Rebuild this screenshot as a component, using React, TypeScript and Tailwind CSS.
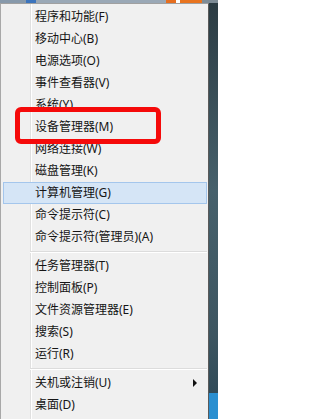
import React from "react";

type Entry = { label: string; sub?: boolean } | "sep";

const entries: Entry[] = [
  { label: "程序和功能(F)" },
  { label: "移动中心(B)" },
  { label: "电源选项(O)" },
  { label: "事件查看器(V)" },
  { label: "系统(Y)" },
  { label: "设备管理器(M)" },
  { label: "网络连接(W)" },
  { label: "磁盘管理(K)" },
  { label: "计算机管理(G)" },
  { label: "命令提示符(C)" },
  { label: "命令提示符(管理员)(A)" },
  "sep",
  { label: "任务管理器(T)" },
  { label: "控制面板(P)" },
  { label: "文件资源管理器(E)" },
  { label: "搜索(S)" },
  { label: "运行(R)" },
  "sep",
  { label: "关机或注销(U)", sub: true },
  { label: "桌面(D)" },
];

const HOVERED = "计算机管理(G)";

function MenuItem({ label, sub }: { label: string; sub?: boolean }) {
  const active = label === HOVERED;
  return (
    <div className="h-[22px] pl-[2px] pr-[1px]">
      <div
        className={
          active
            ? "flex h-full items-center border border-[#a4c6ec] bg-[#d5e5f6] pl-[31px]"
            : "flex h-full items-center border border-transparent pl-[31px]"
        }
      >
        <span className="whitespace-nowrap">{label}</span>
        {sub && (
          <span className="ml-auto mr-[9px] h-0 w-0 border-y-[4px] border-l-[4px] border-y-transparent border-l-[#111]" />
        )}
      </div>
    </div>
  );
}

function Separator() {
  return (
    <div className="flex h-[7px] items-center pl-[29px] pr-[1px]">
      <div className="h-[2px] w-full border-t border-[#dcdcdc] bg-white" />
    </div>
  );
}

export default function App() {
  return (
    <div className="relative flex h-[419px] w-[218px] flex-col overflow-hidden bg-[#34464f] font-['Noto_Sans','Noto_Sans_CJK_SC',sans-serif] text-[12px] leading-none text-[#151515]">
      {/* desktop peeking above the menu */}
      <div className="flex h-[3px] shrink-0">
        <div className="w-[26px] bg-[#8799ab]" />
        <div className="w-[10px] bg-[#3b74bd]" />
        <div className="w-[130px] bg-[#9aa8b6]" />
        <div className="w-[10px] bg-[#e66e1f]" />
        <div className="w-[4px] bg-white" />
        <div className="w-[22px] bg-[#e8741f]" />
        <div className="flex-1 bg-[#7e8c96]" />
      </div>

      <div className="flex min-h-0 flex-1">
        <div className="w-[209px] shrink-0 border-l border-r border-t border-l-[#a8a8a8] border-r-[#5a5a5a] border-t-[#a0a0a0] bg-[#f0f0f0] bg-[linear-gradient(to_right,#f0f0f0_29px,#e0e0e0_29px,#e0e0e0_30px,#ffffff_30px,#ffffff_31px,#f0f0f0_31px)] pt-[2px]">
          {entries.map((e, i) =>
            e === "sep" ? <Separator key={i} /> : <MenuItem key={i} {...e} />
          )}
        </div>
        <div className="flex flex-1 flex-col bg-[linear-gradient(to_bottom,#2c3c43,#46606b_45%,#3d5560_80%,#2a4654)]">
          <div className="flex-1" />
          <div className="h-[26px] bg-[#2a8fd0]" />
        </div>
      </div>

      {/* red annotation box */}
      <div className="absolute left-[15px] top-[107px] h-[37px] w-[146px] rounded-[6px] border-[5px] border-[#f50a0a]" />
    </div>
  );
}
